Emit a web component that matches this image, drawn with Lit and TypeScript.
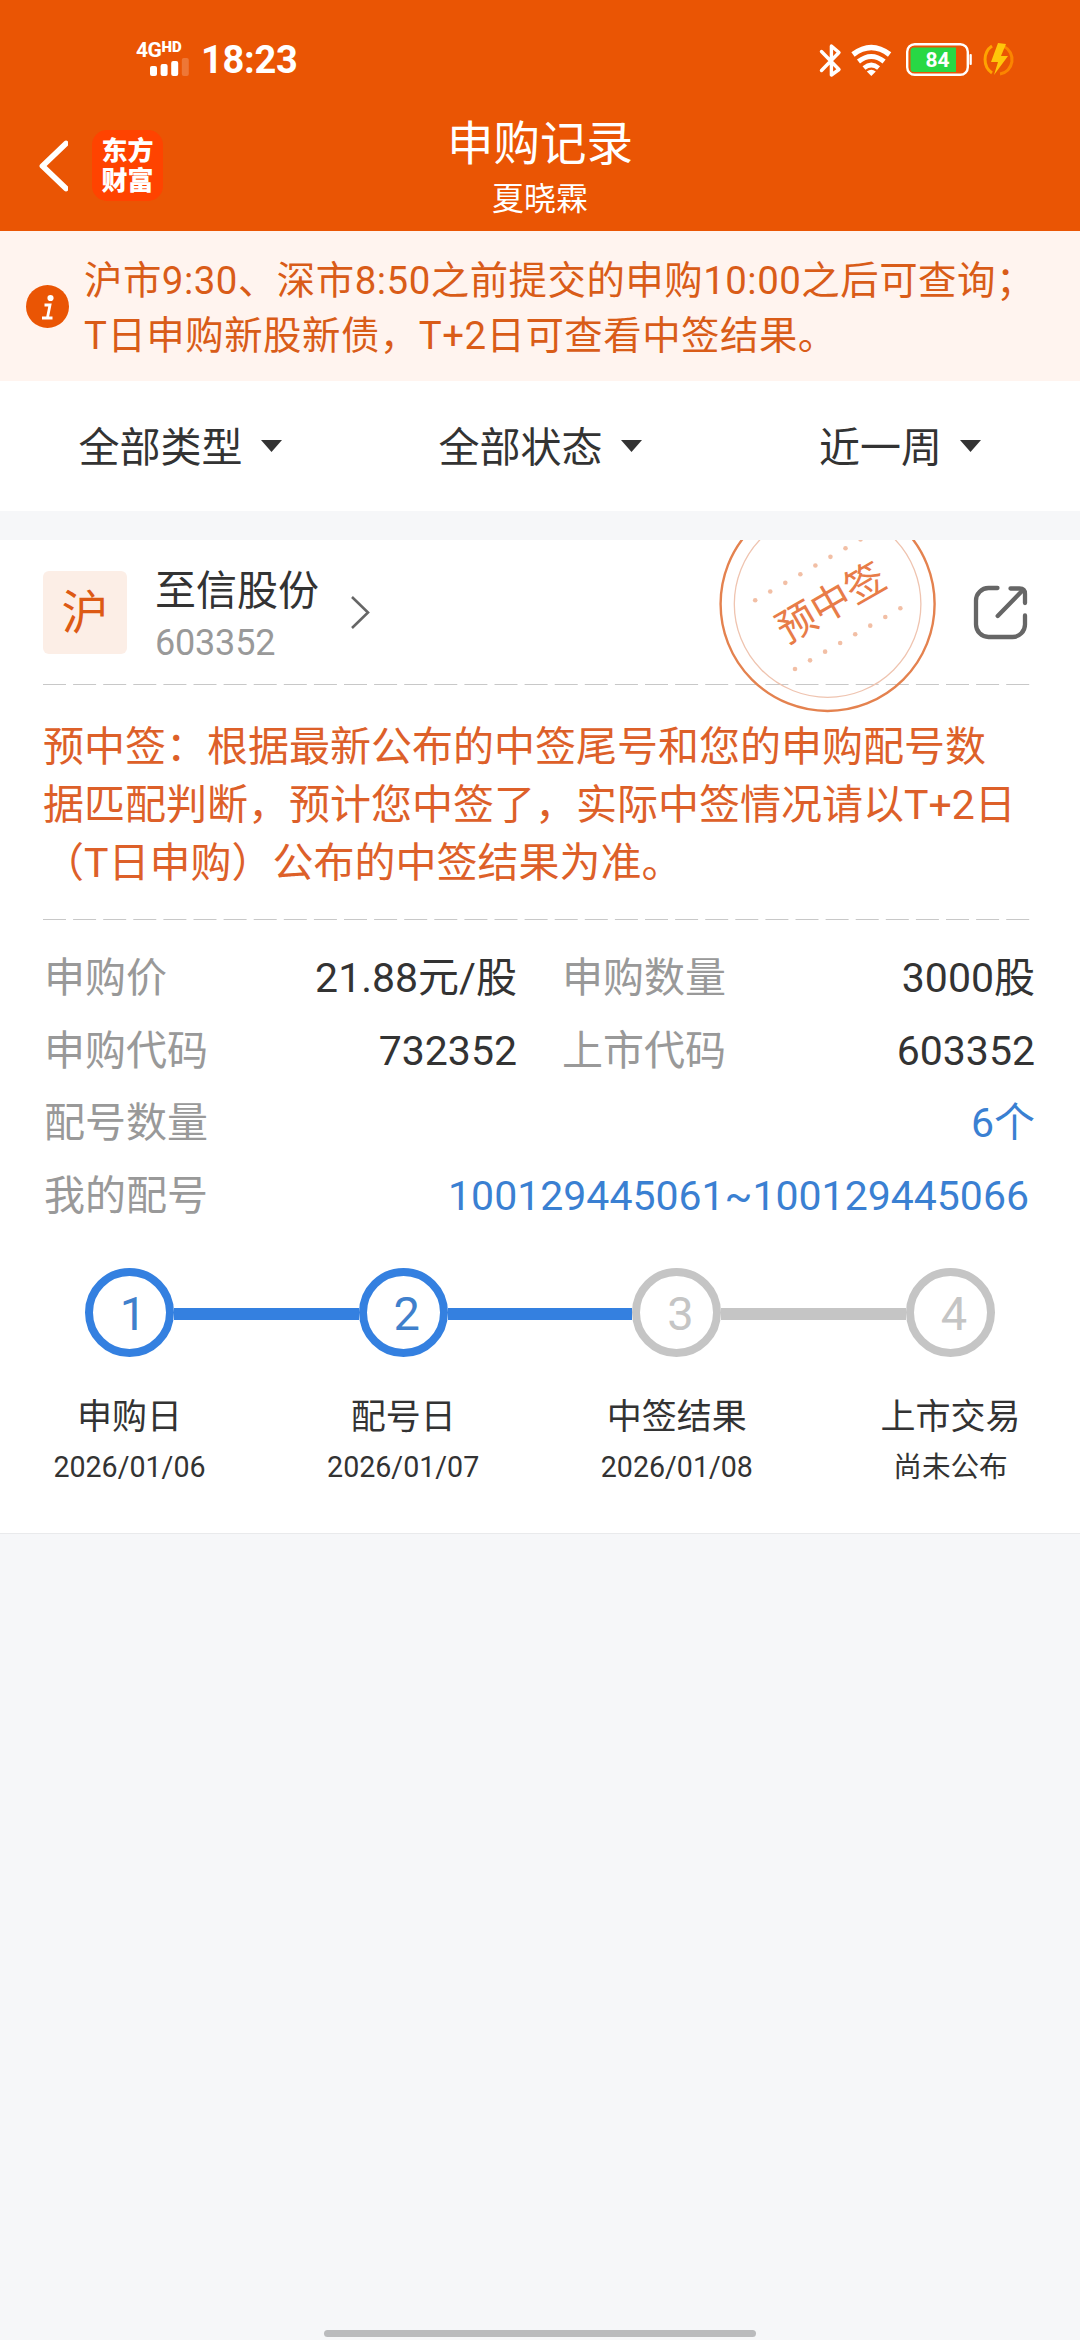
import { LitElement, html, svg, css } from "lit";
import { customElement } from "lit/decorators.js";
import { classMap } from "lit/directives/class-map.js";

interface Step {
  label: string;
  date: string;
  done: boolean;
}

const FILTERS = ["全部类型", "全部状态", "近一周"];

const STEPS: Step[] = [
  { label: "申购日", date: "2026/01/06", done: true },
  { label: "配号日", date: "2026/01/07", done: true },
  { label: "中签结果", date: "2026/01/08", done: false },
  { label: "上市交易", date: "尚未公布", done: false },
];

const DASHES = Array.from({ length: 33 }, (_, i) => i * 30.1);
const DOTS = Array.from({ length: 8 }, (_, i) => i);

@customElement("status-bar")
class StatusBar extends LitElement {
  static styles = css`
    :host {
      display: flex;
      justify-content: space-between;
      height: 120px;
      box-sizing: border-box;
      padding: 40px 64px 0 136px;
      color: #fff;
      font-weight: 700;
    }
    .side {
      display: flex;
      align-items: flex-start;
    }
    .signal {
      display: flex;
      flex-direction: column;
      width: 54px;
      margin-right: 11px;
    }
    .net {
      display: flex;
      align-items: flex-start;
      height: 18px;
    }
    .gen {
      font-size: 21px;
      line-height: 20px;
      letter-spacing: -0.5px;
    }
    .hd {
      font-size: 15px;
      line-height: 14px;
      font-weight: 900;
    }
    .bars {
      display: block;
      margin-left: 14px;
    }
    .time {
      font-size: 38px;
      line-height: 40px;
      letter-spacing: -0.3px;
    }
    .icon {
      display: block;
    }
    .battery-text {
      font-size: 21px;
      font-weight: 700;
    }
  `;

  render() {
    return html`
      <div class="side">
        <div class="signal">
          <div class="net"><span class="gen">4G</span><span class="hd">HD</span></div>
          <svg class="bars" width="40" height="18" viewBox="0 0 40 18" fill="#fff">
            <rect x="0" y="8" width="7" height="10" rx="2" />
            <rect x="10.6" y="6" width="7" height="12" rx="2" />
            <rect x="21.2" y="3" width="7" height="15" rx="2" />
            <rect x="31.8" y="0" width="7" height="18" rx="2" opacity=".2" />
          </svg>
        </div>
        <div class="time">18:23</div>
      </div>
      <div class="side">
        <svg class="icon" width="197" height="40" viewBox="819 40 197 40">
          <path d="M821.500 51.500 839 69.500 831.400 75V46L839 52.500 821.500 70.500" fill="none" stroke="#fff" stroke-width="3.400" stroke-linejoin="round" stroke-linecap="round" />
          <g fill="none" stroke="#fff">
            <path d="M853 54.500Q871.300 40.500 889.600 54.500" stroke-width="5.400" />
            <path d="M858.500 61.500Q871.300 51.500 884.100 61.500" stroke-width="5" />
            <path d="M864 68Q871.300 62 878.600 68" stroke-width="4.600" />
          </g>
          <path d="M866.800 71.500Q871.300 67.800 875.800 71.500L871.300 76Z" fill="#fff" />
          <rect x="907.200" y="44.200" width="60.600" height="30.600" rx="7.500" fill="none" stroke="#fff" stroke-width="2.400" />
          <path d="M914 47.500H956V72H914Q910.500 72 910.500 68.500V51Q910.500 47.500 914 47.500Z" fill="#28d845" />
          <rect x="969.500" y="54" width="2.300" height="11" rx="1" fill="#fff" />
          <text class="battery-text" x="937.500" y="66.500" text-anchor="middle" fill="#fff">84</text>
          <path d="M992 46A15 16 0 0 0 992 73" fill="none" stroke="#ffa300" stroke-width="3" />
          <path d="M1004 46.500A14 14.500 0 0 1 1000 74" fill="none" stroke="#fb8500" stroke-width="3" />
          <path d="M998 43 991 62H998L994 75 1008 56H1001L1006 44Z" fill="#ffc60a" />
        </svg>
      </div>
    `;
  }
}

@customElement("page-header")
class PageHeader extends LitElement {
  static styles = css`
    :host {
      display: grid;
      grid-template-columns: 200px 1fr 200px;
      height: 110px;
    }
    .left {
      display: flex;
      align-items: flex-start;
      gap: 24px;
      padding: 10px 0 0 36px;
    }
    .back {
      display: block;
      padding-top: 6px;
    }
    .logo {
      box-sizing: border-box;
      width: 71px;
      height: 71px;
      padding: 4px 0 0 9.500px;
      border-radius: 15px;
      background: #ff4300;
      color: #fff;
      font: 900 26px/30px "Noto Sans CJK SC", sans-serif;
    }
    .titles {
      text-align: center;
      color: #fff;
    }
    .title {
      font-size: 46.5px;
      line-height: 48px;
    }
    .user {
      font-size: 32px;
      line-height: 36px;
      margin-top: 13px;
    }
  `;

  render() {
    return html`
      <div class="left">
        <svg class="back" width="32" height="60" viewBox="36 137 32 60">
          <path d="M66 144.500 42.500 167 66 189.500" fill="none" stroke="#fff" stroke-width="5.800" stroke-linecap="round" stroke-linejoin="round" />
        </svg>
        <div class="logo">东方财富</div>
      </div>
      <div class="titles">
        <div class="title">申购记录</div>
        <div class="user">夏晓霖</div>
      </div>
    `;
  }
}

@customElement("progress-steps")
class ProgressSteps extends LitElement {
  static styles = css`
    :host {
      display: flex;
      justify-content: center;
      height: 265px;
    }
    .step {
      flex: none;
      width: 273.7px;
      display: flex;
      flex-direction: column;
      align-items: center;
      color: #333;
    }
    .track {
      display: flex;
      align-items: center;
      width: 100%;
      height: 89px;
    }
    .line {
      flex: 1;
      height: 12px;
      margin-top: 3px;
      background: #c5c5c5;
    }
    .line.done {
      background: #3480e0;
    }
    .line.none {
      background: transparent;
    }
    .ring {
      display: flex;
      align-items: center;
      justify-content: center;
      box-sizing: border-box;
      width: 89px;
      height: 89px;
      border: 8.500px solid #c5c5c5;
      border-radius: 50%;
      color: #c5c5c5;
      font-size: 47px;
      font-weight: 400;
      line-height: 50px;
      padding: 2px 0 0 7px;
    }
    .ring.done {
      border-color: #3480e0;
      color: #3f80cc;
    }
    .label {
      margin-top: 39px;
      font-size: 35px;
      line-height: 44px;
    }
    .date {
      margin-top: 9px;
      font-size: 28.600px;
      line-height: 36px;
    }
  `;

  private line(index: number) {
    const none = index < 0 || index >= STEPS.length - 1;
    const done = !none && STEPS[index].done;
    return html`<div class=${classMap({ line: true, done, none })}></div>`;
  }

  render() {
    return STEPS.map(
      (s, i) => html`
        <div class="step">
          <div class="track">
            ${this.line(i - 1)}
            <div class=${classMap({ ring: true, done: s.done })}>${i + 1}</div>
            ${this.line(i)}
          </div>
          <div class="label">${s.label}</div>
          <div class="date">${s.date}</div>
        </div>
      `
    );
  }
}

@customElement("record-card")
class RecordCard extends LitElement {
  static styles = css`
    :host {
      display: block;
      position: relative;
      overflow: hidden;
      box-sizing: border-box;
      height: 994px;
      background: #fff;
      border-bottom: 1px solid #e9eaec;
      color: #333;
    }
    .head {
      display: flex;
      align-items: flex-start;
      height: 143px;
      box-sizing: border-box;
      padding: 31px 51px 0 43px;
    }
    .market {
      width: 84px;
      height: 83px;
      border-radius: 6px;
      background: #fceee6;
      color: #dd5a14;
      font-size: 47px;
      line-height: 83px;
      text-align: center;
    }
    .names {
      margin-left: 28px;
    }
    .name {
      font-size: 41px;
      line-height: 44px;
      margin-top: -2px;
    }
    .code {
      font-size: 36px;
      line-height: 40px;
      color: #999;
      margin-top: 10px;
      letter-spacing: -0.2px;
    }
    .go {
      display: block;
      margin: 22px 0 0 30px;
    }
    .share {
      display: block;
      margin: 13px 0 0 auto;
    }
    .dash {
      display: block;
      margin-left: 43px;
    }
    .hint {
      margin: 0;
      padding: 33px 0 0 43px;
      height: 233px;
      box-sizing: border-box;
      color: #dd6029;
      font-size: 41px;
      line-height: 58px;
      white-space: nowrap;
    }
    .rows {
      display: grid;
      grid-template-columns: 473px 473px;
      column-gap: 45px;
      grid-auto-rows: 72.500px;
      padding: 22px 44px 0 44px;
      height: 348px;
      box-sizing: border-box;
      font-size: 41px;
      line-height: 72px;
    }
    .row {
      display: flex;
      justify-content: space-between;
    }
    .wide {
      grid-column: 1 / 3;
    }
    .key {
      color: #999;
    }
    .link {
      color: #3a80d2;
    }
    .inset {
      padding-right: 6px;
    }
    .stamp {
      position: absolute;
      left: 717px;
      top: -46px;
    }
    .stamp-text {
      font-size: 39.500px;
    }
  `;

  private dashes() {
    return html`<svg class="dash" width="990" height="2" viewBox="0 0 990 2">
      ${DASHES.map((x) => svg`<rect x=${x} y="1" width="23" height="1" fill="#c8c8c8" />`)}
    </svg>`;
  }

  render() {
    return html`
      <div class="head">
        <div class="market">沪</div>
        <div class="names">
          <div class="name">至信股份</div>
          <div class="code">603352</div>
        </div>
        <svg class="go" width="24" height="40" viewBox="349 593 24 40">
          <path d="M352 597 368 612.500 352 628" fill="none" stroke="#666" stroke-width="2.600" />
        </svg>
        <svg class="share" width="58" height="58" viewBox="970 584 58 58">
          <g fill="none" stroke="#666" stroke-width="4.300" stroke-linecap="round" stroke-linejoin="round">
            <path d="M996.500 588H987.500A12.500 12.500 0 0 0 975 600.500V624.500A12.500 12.500 0 0 0 987.500 637H1011.500A12.500 12.500 0 0 0 1024 624.500V615.500" />
            <path d="M1009.500 588.500H1018.500Q1024 588.500 1024 594V603" />
            <path d="M996.700 616 1021.500 590.500" />
          </g>
        </svg>
      </div>
      ${this.dashes()}
      <p class="hint">
        预中签：根据最新公布的中签尾号和您的申购配号数<br />据匹配判断，预计您中签了，实际中签情况请以T+2日<br />（T日申购）公布的中签结果为准。
      </p>
      ${this.dashes()}
      <div class="rows">
        <div class="row"><span class="key">申购价</span><span>21.88元/股</span></div>
        <div class="row"><span class="key">申购数量</span><span>3000股</span></div>
        <div class="row"><span class="key">申购代码</span><span>732352</span></div>
        <div class="row"><span class="key">上市代码</span><span>603352</span></div>
        <div class="row wide"><span class="key">配号数量</span><span class="link">6个</span></div>
        <div class="row wide">
          <span class="key">我的配号</span><span class="link inset">100129445061~100129445066</span>
        </div>
      </div>
      <progress-steps></progress-steps>
      <svg class="stamp" width="221" height="220" viewBox="717 494 221 220">
        <circle cx="827.600" cy="604" r="107" fill="none" stroke="#e4824f" stroke-width="2.400" />
        <circle cx="827.600" cy="604" r="93.300" fill="none" stroke="#efc4b0" stroke-width="1.300" />
        <g fill="#f2bfa5">
          ${DOTS.map(
            (i) => svg`<circle cx=${755.2 + i * 15.05} cy=${600.2 - i * 8.67} r="2.300" />
              <circle cx=${795 + i * 15.05} cy=${669 - i * 8.67} r="2.300" />`
          )}
        </g>
        <text class="stamp-text" transform="translate(830.600 602.300) rotate(-30)" x="0" y="14.500" text-anchor="middle" fill="#e87c48">预中签</text>
      </svg>
    `;
  }
}

@customElement("app-root")
class AppRoot extends LitElement {
  static styles = css`
    :host {
      display: flex;
      flex-direction: column;
      width: 1080px;
      height: 2340px;
      background: #f6f7f9;
      font-family: Roboto, "Noto Sans CJK SC", sans-serif;
      overflow: hidden;
    }
    .top {
      height: 231px;
      flex: none;
      background: #ea5504;
    }
    .notice {
      display: flex;
      align-items: center;
      gap: 15px;
      height: 150px;
      flex: none;
      box-sizing: border-box;
      padding: 0 0 0 26px;
      background: #fff4ef;
      color: #d95c18;
      font-size: 38.400px;
      line-height: 55px;
      letter-spacing: 0.520px;
      white-space: nowrap;
    }
    .notice-text {
      padding-top: 4px;
    }
    .filters {
      display: grid;
      grid-template-columns: repeat(3, 1fr);
      height: 130px;
      flex: none;
      background: #fff;
      color: #333;
      font-size: 41px;
      line-height: 130px;
      margin-bottom: 29px;
    }
    .filter {
      display: flex;
      align-items: center;
      justify-content: center;
      gap: 18px;
    }
    .filter-text {
      line-height: 60px;
      padding-top: 3px;
    }
    .spacer {
      flex: 1;
    }
    .home {
      align-self: center;
      width: 432px;
      height: 7px;
      border-radius: 4px;
      background: #babbbd;
      margin-bottom: 3px;
    }
  `;

  render() {
    return html`
      <div class="top">
        <status-bar></status-bar>
        <page-header></page-header>
      </div>
      <div class="notice">
        <svg width="43" height="43" viewBox="0 0 43 43">
          <circle cx="21.500" cy="21.500" r="21.500" fill="#ea5504" />
          <circle cx="24.500" cy="13" r="3.100" fill="#fff" />
          <path d="M18.500 20H24L21.500 32.500M16 33H26.500" fill="none" stroke="#fff" stroke-width="2.800" />
        </svg>
        <div class="notice-text">沪市9:30、深市8:50之前提交的申购10:00之后可查询；<br />T日申购新股新债，T+2日可查看中签结果。</div>
      </div>
      <div class="filters">
        ${FILTERS.map(
          (f) => html`<div class="filter">
            <span class="filter-text">${f}</span>
            <svg width="21" height="12" viewBox="0 0 21 12"><path d="M0 0H21L10.500 12Z" fill="#333" /></svg>
          </div>`
        )}
      </div>
      <record-card></record-card>
      <div class="spacer"></div>
      <div class="home"></div>
    `;
  }
}
